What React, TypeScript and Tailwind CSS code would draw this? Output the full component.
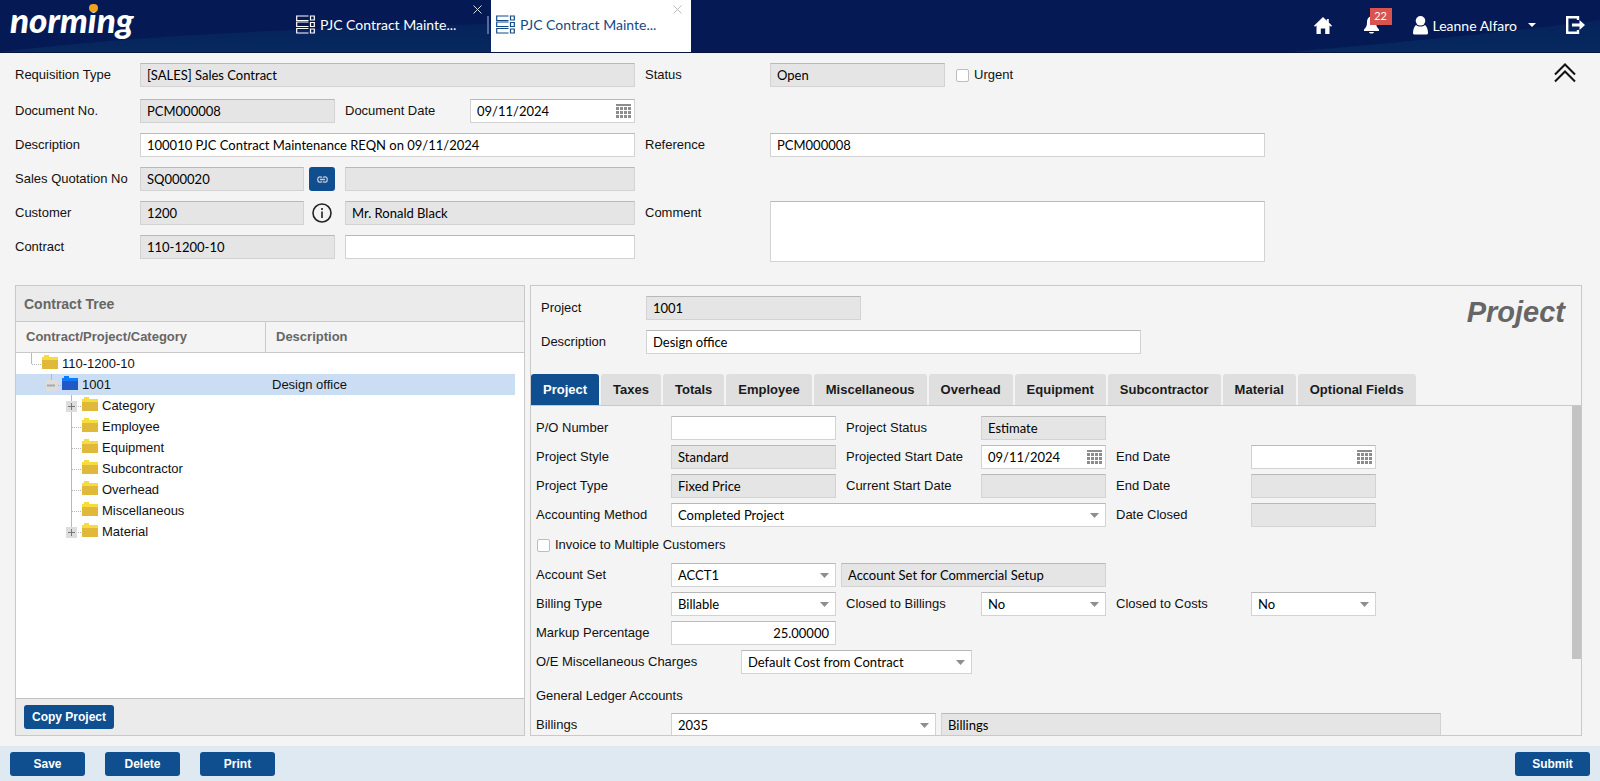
import { useId, useState } from "react";
import type { ReactNode } from "react";
import clsx from "clsx";

type FieldProps = {
  label: string;
  value?: string;
  width: string;
  readOnly?: boolean;
  alignRight?: boolean;
};

const boxStyle =
  "h-6 w-full border border-[#d3d3d3] border-t-[#b9b9b9] px-[6px] font-['Lato',sans-serif] text-[13px] leading-5 text-black outline-none focus:border-[#0f4f90]";

const TextBox = ({ label, value = "", width, readOnly, alignRight }: FieldProps) => (
  <div className={clsx("shrink-0", width)}>
    <input
      type="text"
      aria-label={label}
      defaultValue={value}
      readOnly={readOnly}
      className={clsx(boxStyle, readOnly ? "bg-[#e5e5e5]" : "bg-white", alignRight && "text-right")}
    />
  </div>
);

const DateBox = ({ label, value = "", width }: FieldProps) => (
  <div className={clsx("relative shrink-0", width)}>
    <input type="text" aria-label={label} defaultValue={value} className={clsx(boxStyle, "bg-white pr-6")} />
    <button type="button" aria-label={`Pick ${label}`} className="absolute right-1 top-[5px]">
      <svg width="15" height="14" viewBox="0 0 15 14" fill="#8c8c8c">
        <path d="M0 0h15v2H0z" />
        {[3, 7, 11].map((y) =>
          [0, 4, 8, 12].map((x) => <rect key={`${x}-${y}`} x={x} y={y} width="3" height="3" />)
        )}
      </svg>
    </button>
  </div>
);

const SelectBox = ({ label, value = "", width }: FieldProps) => (
  <div className={clsx("relative shrink-0", width)}>
    <select aria-label={label} className={clsx(boxStyle, "appearance-none bg-white pr-6")}>
      <option>{value}</option>
    </select>
    <svg className="pointer-events-none absolute right-[7px] top-[10px]" width="9" height="5" viewBox="0 0 9 5">
      <path d="M0 0h9L4.500 5z" fill="#8e8e8e" />
    </svg>
  </div>
);

const Label = ({ children, width }: { children: ReactNode; width: string }) => (
  <span className={clsx("shrink-0 whitespace-nowrap", width)}>{children}</span>
);

const Row = ({ children }: { children: ReactNode }) => <div className="flex h-6 items-center">{children}</div>;

const CheckBox = ({ children }: { children: string }) => {
  const id = useId();
  return (
    <div className="flex items-center gap-[5px]">
      <input
        id={id}
        type="checkbox"
        className="h-[13px] w-[13px] appearance-none rounded-[2px] border border-[#bdbdbd] bg-white checked:bg-[#0f4f90]"
      />
      <label htmlFor={id}>{children}</label>
    </div>
  );
};

const BlueButton = ({ children, className }: { children: ReactNode; className: string }) => (
  <button
    type="button"
    className={clsx("h-6 rounded-[3px] bg-[#0f4f90] text-[12px] font-bold text-white hover:bg-[#0c4178]", className)}
  >
    {children}
  </button>
);

const WindowTab = ({ active }: { active?: boolean }) => (
  <div
    className={clsx(
      "relative flex h-[52px] w-[200px] items-center gap-[5px] pl-[5px] pb-[3px]",
      active ? "bg-white text-[#124a86]" : "text-white"
    )}
  >
    <svg width="19" height="19" viewBox="0 0 19 19" fill="none" stroke="currentColor" strokeWidth="1.200">
      <path d="M12.500 1H.7v4.500H12.500M12.500 7H.7v4.500H12.500M12.500 13.500H.7V18H12.500" />
      <path d="M14.500 1h3.800v4h-3.800zM14.500 7.500h3.800v4h-3.800zM14.500 14h3.800v4h-3.800z" />
    </svg>
    <a href="#" className="whitespace-nowrap font-['Lato',sans-serif] text-[14px]">
      PJC Contract Mainte...
    </a>
    <button
      type="button"
      aria-label="Close tab"
      className={clsx("absolute right-[9px] top-[5px]", active ? "text-[#bbb]" : "text-[#d5dae6]")}
    >
      <svg width="9" height="9" viewBox="0 0 9 9" stroke="currentColor">
        <path d="M.5.5l8 8M8.500.5l-8 8" />
      </svg>
    </button>
    {!active && <span className="absolute right-[2px] top-4 h-[18px] w-[2px] bg-[#56699a]" />}
  </div>
);

const Header = () => (
  <header className="relative flex h-[53px] shrink-0 border-b border-[#041540] bg-[#051a54]">
    <svg className="absolute inset-0 h-full w-full" viewBox="0 0 1600 52" preserveAspectRatio="none">
      <defs>
        <linearGradient id="sweep" x1="0" y1="0" x2="0" y2="1">
          <stop offset="0" stopColor="#06225c" />
          <stop offset="1" stopColor="#06295f" />
        </linearGradient>
      </defs>
      <path d="M0 52Q180 30 491 24V52z" fill="url(#sweep)" />
      <path d="M1290 52Q1480 36 1600 20V52z" fill="url(#sweep)" />
    </svg>
    <div className="relative w-[291px] pl-[10px]">
      <a href="#" className="relative inline-block font-['Lato',sans-serif] text-[35px] font-black italic leading-[38px] text-white">
        norming
        <span className="absolute left-[79px] top-[4px] h-2 w-[9px] rounded-full bg-[#f0a41c]" />
      </a>
    </div>
    <nav className="relative flex">
      <WindowTab />
      <WindowTab active />
    </nav>
    <div className="relative ml-auto flex items-center pb-[2px] pr-[15px] text-white">
      <a href="#" aria-label="Home" className="mr-[32px]">
        <svg width="18" height="17" viewBox="0 0 18 17" fill="currentColor">
          <path d="M9 0L0 8.800l1 1L2.500 8.600V17h4.300v-5.500h4.400V17h4.300V8.600L17 9.800l1-1-3.200-3.200V2h-2v1.700z" />
        </svg>
      </a>
      <button type="button" aria-label="Notifications" className="relative mr-[34px]">
        <svg width="15" height="18" viewBox="0 0 15 18" fill="currentColor">
          <path d="M7.500 0C4 1 3 3.500 3 6.500 3 10 2 11.500 0 13.500V15h15v-1.500c-2-2-3-3.500-3-7C12 3.500 11 1 7.500 0zM5 16h5c-.5 2-4.500 2-5 0z" />
        </svg>
        <span className="absolute -top-2 left-[6px] h-[17px] w-[22px] bg-[#d9534f] font-['Lato',sans-serif] text-[11px] leading-4">22</span>
      </button>
      <button type="button" className="mr-[30px] flex items-center gap-[5px]">
        <svg width="15" height="19" viewBox="0 0 15 19" fill="currentColor">
          <circle cx="7.500" cy="4.800" r="4.800" />
          <path d="M3 9c2.500 2 6.500 2 9 0 2 1.500 3 5 3 8 0 1-.8 1.500-2 1.500H2C.8 18.500 0 18 0 17c0-3 1-6.500 3-8z" />
        </svg>
        <span className="font-['Lato',sans-serif] text-[14px]">Leanne Alfaro</span>
        <svg className="ml-[6px]" width="8" height="4" viewBox="0 0 8 4" fill="currentColor">
          <path d="M0 0h8L4 4z" />
        </svg>
      </button>
      <a href="#" aria-label="Log out">
        <svg width="19" height="18" viewBox="0 0 19 18" fill="currentColor">
          <path d="M12 4V1.200H1.200v15.600H12V14" fill="none" stroke="currentColor" strokeWidth="2.400" />
          <path d="M6 7.500h7.500V4L19 9l-5.500 5v-3.500H6z" />
        </svg>
      </a>
    </div>
  </header>
);

const RequisitionForm = () => (
  <form className="relative flex items-start gap-[10px] pb-[23px] pl-[15px] pt-[10px]">
    <div className="flex flex-col gap-[10px]">
      <div className="mb-[2px]">
        <Row>
          <Label width="w-[125px]">Requisition Type</Label>
          <TextBox label="Requisition Type" value="[SALES] Sales Contract" width="w-[495px]" readOnly />
        </Row>
      </div>
      <Row>
        <Label width="w-[125px]">Document No.</Label>
        <TextBox label="Document No." value="PCM000008" width="w-[195px] mr-[10px]" readOnly />
        <Label width="w-[125px]">Document Date</Label>
        <DateBox label="Document Date" value="09/11/2024" width="w-[165px]" />
      </Row>
      <Row>
        <Label width="w-[125px]">Description</Label>
        <TextBox label="Description" value="100010 PJC Contract Maintenance REQN on 09/11/2024" width="w-[495px]" />
      </Row>
      <Row>
        <Label width="w-[125px]">Sales Quotation No</Label>
        <TextBox label="Sales Quotation No" value="SQ000020" width="w-[164px] mr-[5px]" readOnly />
        <button type="button" aria-label="Open quotation" className="mr-[10px] flex h-6 w-[26px] items-center justify-center rounded-[3px] bg-[#0f4f90]">
          <svg width="11" height="7" viewBox="0 0 11 7" fill="none" stroke="#c9c9c9" strokeWidth="1.300">
            <path d="M5 1.500C3.500.2.700.7.700 3.500S3.500 6.800 5 5.500M6 1.500C7.500.2 10.300.7 10.300 3.500S7.500 6.800 6 5.500M3 3.500h5" />
          </svg>
        </button>
        <TextBox label="Quotation name" width="w-[290px]" readOnly />
      </Row>
      <Row>
        <Label width="w-[125px]">Customer</Label>
        <TextBox label="Customer" value="1200" width="w-[164px] mr-[5px]" readOnly />
        <button type="button" aria-label="Customer information" className="mr-[10px] flex w-[26px] justify-center">
          <svg width="20" height="20" viewBox="0 0 20 20" fill="none" stroke="#222" strokeWidth="1.600">
            <circle cx="10" cy="10" r="9" />
            <path d="M10 8.500V15M10 5v2" />
          </svg>
        </button>
        <TextBox label="Customer name" value="Mr. Ronald Black" width="w-[290px]" readOnly />
      </Row>
      <Row>
        <Label width="w-[125px]">Contract</Label>
        <TextBox label="Contract" value="110-1200-10" width="w-[195px] mr-[10px]" readOnly />
        <TextBox label="Contract name" width="w-[290px]" />
      </Row>
    </div>
    <div className="flex flex-col">
      <Row>
        <Label width="w-[125px]">Status</Label>
        <TextBox label="Status" value="Open" width="w-[175px] mr-[11px]" readOnly />
        <CheckBox>Urgent</CheckBox>
      </Row>
      <div className="mt-[46px]">
        <Row>
          <Label width="w-[125px]">Reference</Label>
          <TextBox label="Reference" value="PCM000008" width="w-[495px]" />
        </Row>
      </div>
      <div className="mt-[44px] flex">
        <label htmlFor="comment" className="w-[125px] leading-6">
          Comment
        </label>
        <textarea id="comment" className="h-[61px] w-[495px] resize-none border border-[#d3d3d3] border-t-[#b9b9b9] bg-white px-[6px] outline-none" />
      </div>
    </div>
    <button type="button" aria-label="Collapse header" className="absolute right-6 top-[10px]">
      <svg width="22" height="20" viewBox="0 0 22 20" fill="none" stroke="#111" strokeWidth="2">
        <path d="M1 11.500L11 1.500l10 10M1 18.500l10-10 10 10" />
      </svg>
    </button>
  </form>
);

const treeRows = [
  { name: "110-1200-10", indent: "pl-[6px]", node: "root" },
  { name: "1001", indent: "pl-[26px]", node: "minus", description: "Design office" },
  { name: "Category", indent: "pl-[46px]", node: "plus" },
  { name: "Employee", indent: "pl-[46px]", node: "leaf" },
  { name: "Equipment", indent: "pl-[46px]", node: "leaf" },
  { name: "Subcontractor", indent: "pl-[46px]", node: "leaf" },
  { name: "Overhead", indent: "pl-[46px]", node: "leaf" },
  { name: "Miscellaneous", indent: "pl-[46px]", node: "leaf" },
  { name: "Material", indent: "pl-[46px]", node: "plus" },
];

const TreeNode = ({ node, last }: { node: string; last: boolean }) => (
  <svg width="20" height="21" viewBox="0 0 20 21">
    <path d={node === "leaf" || (node === "plus" && !last) ? "M9.500 0v21" : "M9.500 0v11"} stroke="#b9b9b9" />
    <path d="M10 11.500h9" stroke="#b5b5b5" strokeDasharray="1 1" />
    {(node === "plus" || node === "minus") && <path d="M4 6h11v11H4z" fill="#dddddd" />}
    {node === "plus" && <path d="M6 11.500h7M9.500 8v7" stroke="#777" />}
    {node === "minus" && <path d="M5 11.500h8" stroke="#a9a9a9" strokeWidth="2" />}
  </svg>
);

const ContractTree = () => {
  const [selected, setSelected] = useState("1001");

  return (
    <section className="flex min-h-0 flex-col border border-[#c9c9c9] bg-white">
      <h2 className="h-[36px] shrink-0 border-b border-[#c9c9c9] bg-[#ebebeb] pl-2 text-[14px] font-bold leading-9 text-[#666]">
        Contract Tree
      </h2>
      <div className="min-h-0 flex-1 overflow-hidden">
        <table className="w-full table-fixed border-separate border-spacing-0 text-left">
          <colgroup>
            <col className="w-[250px]" />
            <col />
            <col className="w-[9px]" />
          </colgroup>
          <thead className="bg-[#f4f4f4] text-[#666]">
            <tr className="h-[31px]">
              <th className="border-b border-r border-[#c9c9c9] pl-[10px]">Contract/Project/Category</th>
              <th className="border-b border-[#c9c9c9] pl-[10px]">Description</th>
              <th className="border-b border-[#c9c9c9]" />
            </tr>
          </thead>
          <tbody>
            {treeRows.map((row, i) => {
              const active = row.name === selected;
              return (
                <tr key={row.name} className="h-[21px] cursor-pointer" onClick={() => setSelected(row.name)}>
                  <td className={clsx("p-0", active && "bg-[#cbddf2]")}>
                    <div className={clsx("flex h-[21px] items-center", row.indent)}>
                      <TreeNode node={row.node} last={i === treeRows.length - 1} />
                      <svg className="mb-[3px] mr-1" width="16" height="14" viewBox="0 0 16 14">
                        <path d="M0 2h2V0h5v2h9v12H0z" fill={active ? "#0d7cff" : "#f6dc3c"} />
                        <path d="M0 5h16v9H0z" fill={active ? "#2257c8" : "#e0b93a"} />
                      </svg>
                      <span className="leading-5">{row.name}</span>
                    </div>
                  </td>
                  <td className={clsx("py-0 pl-[6px]", active && "bg-[#cbddf2]")}>{row.description}</td>
                  <td />
                </tr>
              );
            })}
          </tbody>
        </table>
      </div>
      <div className="flex h-[37px] shrink-0 items-center border-t border-[#c0c0c0] bg-[#ebebeb] pl-2">
        <BlueButton className="w-[90px]">Copy Project</BlueButton>
      </div>
    </section>
  );
};

const tabs = [
  "Project",
  "Taxes",
  "Totals",
  "Employee",
  "Miscellaneous",
  "Overhead",
  "Equipment",
  "Subcontractor",
  "Material",
  "Optional Fields",
];

const ProjectDetails = () => (
  <div className="flex flex-col gap-[5px] pl-[5px] pt-[10px]">
    <Row>
      <Label width="w-[135px]">P/O Number</Label>
      <TextBox label="P/O Number" width="w-[165px] mr-[10px]" />
      <Label width="w-[135px]">Project Status</Label>
      <TextBox label="Project Status" value="Estimate" width="w-[125px]" readOnly />
    </Row>
    <Row>
      <Label width="w-[135px]">Project Style</Label>
      <TextBox label="Project Style" value="Standard" width="w-[165px] mr-[10px]" readOnly />
      <Label width="w-[135px]">Projected Start Date</Label>
      <DateBox label="Projected Start Date" value="09/11/2024" width="w-[125px] mr-[10px]" />
      <Label width="w-[135px]">End Date</Label>
      <DateBox label="Projected End Date" width="w-[125px]" />
    </Row>
    <Row>
      <Label width="w-[135px]">Project Type</Label>
      <TextBox label="Project Type" value="Fixed Price" width="w-[165px] mr-[10px]" readOnly />
      <Label width="w-[135px]">Current Start Date</Label>
      <TextBox label="Current Start Date" width="w-[125px] mr-[10px]" readOnly />
      <Label width="w-[135px]">End Date</Label>
      <TextBox label="Current End Date" width="w-[125px]" readOnly />
    </Row>
    <Row>
      <Label width="w-[135px]">Accounting Method</Label>
      <SelectBox label="Accounting Method" value="Completed Project" width="w-[435px] mr-[10px]" />
      <Label width="w-[135px]">Date Closed</Label>
      <TextBox label="Date Closed" width="w-[125px]" readOnly />
    </Row>
    <div className="flex h-[26px] items-center pl-[1px]">
      <CheckBox>Invoice to Multiple Customers</CheckBox>
    </div>
    <Row>
      <Label width="w-[135px]">Account Set</Label>
      <SelectBox label="Account Set" value="ACCT1" width="w-[165px] mr-[5px]" />
      <TextBox label="Account Set Description" value="Account Set for Commercial Setup" width="w-[265px]" readOnly />
    </Row>
    <Row>
      <Label width="w-[135px]">Billing Type</Label>
      <SelectBox label="Billing Type" value="Billable" width="w-[165px] mr-[10px]" />
      <Label width="w-[135px]">Closed to Billings</Label>
      <SelectBox label="Closed to Billings" value="No" width="w-[125px] mr-[10px]" />
      <Label width="w-[135px]">Closed to Costs</Label>
      <SelectBox label="Closed to Costs" value="No" width="w-[125px]" />
    </Row>
    <Row>
      <Label width="w-[135px]">Markup Percentage</Label>
      <TextBox label="Markup Percentage" value="25.00000" width="w-[165px]" alignRight />
    </Row>
    <Row>
      <Label width="w-[205px]">O/E Miscellaneous Charges</Label>
      <SelectBox label="O/E Miscellaneous Charges" value="Default Cost from Contract" width="w-[231px]" />
    </Row>
    <h3 className="mt-[5px] h-6 leading-6">General Ledger Accounts</h3>
    <Row>
      <Label width="w-[135px]">Billings</Label>
      <SelectBox label="Billings" value="2035" width="w-[265px] mr-[5px]" />
      <TextBox label="Billings Account" value="Billings" width="w-[500px]" readOnly />
    </Row>
  </div>
);

const ProjectPanel = () => {
  const [tab, setTab] = useState("Project");

  return (
    <section className="flex min-h-0 min-w-0 flex-col border border-[#c9c9c9]">
      <div className="flex shrink-0 justify-between pb-5 pl-[10px] pr-4 pt-[10px]">
        <div className="flex flex-col gap-[10px]">
          <Row>
            <Label width="w-[105px]">Project</Label>
            <TextBox label="Project" value="1001" width="w-[215px]" readOnly />
          </Row>
          <Row>
            <Label width="w-[105px]">Description</Label>
            <TextBox label="Project Description" value="Design office" width="w-[495px]" />
          </Row>
        </div>
        <h1 className="text-[29px] font-bold italic leading-8 text-[#666]">Project</h1>
      </div>
      <div role="tablist" className="flex h-8 shrink-0 gap-[2px] border-b border-[#c9c9c9]">
        {tabs.map((name) => (
          <button
            key={name}
            type="button"
            role="tab"
            aria-selected={name === tab}
            onClick={() => setTab(name)}
            className={clsx(
              "whitespace-nowrap rounded-t-[3px] px-3 text-[13px] font-bold",
              name === tab ? "bg-[#0f4f90] text-white" : "bg-[#dfdfdf] text-[#1a1a1a]"
            )}
          >
            {name}
          </button>
        ))}
      </div>
      <div className="relative min-h-0 flex-1 overflow-hidden">
        <ProjectDetails />
        <div className="absolute right-0 top-0 h-[77%] w-[9px] bg-[#c3c3c3]" />
      </div>
    </section>
  );
};

const App = () => (
  <div className="flex h-screen flex-col bg-[#f4f4f4] font-['Liberation_Sans',Arial,sans-serif] text-[13px] text-[#111]">
    <Header />
    <RequisitionForm />
    <main className="grid min-h-0 flex-1 grid-cols-[510fr_1052fr] grid-rows-[minmax(0,1fr)] gap-[5px] pb-[10px] pl-[15px] pr-[18px]">
      <ContractTree />
      <ProjectPanel />
    </main>
    <footer className="flex h-[35px] shrink-0 items-center gap-5 bg-[#dfe9f2] px-[10px]">
      <BlueButton className="w-[75px]">Save</BlueButton>
      <BlueButton className="w-[75px]">Delete</BlueButton>
      <BlueButton className="w-[75px]">Print</BlueButton>
      <BlueButton className="ml-auto w-[75px]">Submit</BlueButton>
    </footer>
  </div>
);

export default App;
